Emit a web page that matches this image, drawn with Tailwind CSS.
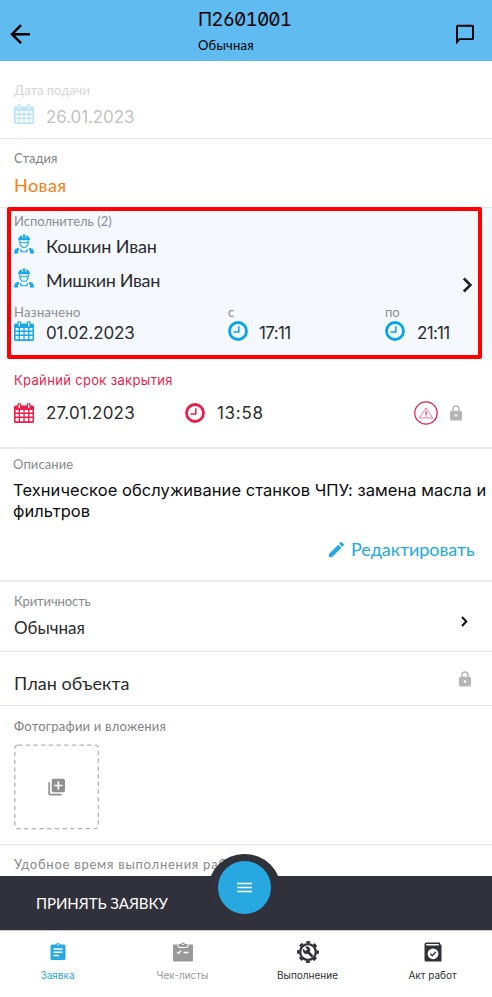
<!DOCTYPE html>
<html lang="ru">
<head>
<meta charset="utf-8">
<title>Заявка П2601001</title>
<script src="https://cdn.jsdelivr.net/npm/@tailwindcss/browser@4"></script>
</head>
<body class="bg-white">
<svg class="hidden">
  <symbol id="cal" viewBox="0 0 20 20">
    <path fill="currentColor" fill-rule="evenodd" d="M1.500 2.500h1.800V2a2 2 0 0 1 4 0v.5h5.400V2a2 2 0 0 1 4 0v.5h1.800A1.500 1.500 0 0 1 20 4v14.500a1.500 1.500 0 0 1-1.500 1.500h-17A1.500 1.500 0 0 1 0 18.500V4a1.500 1.500 0 0 1 1.500-1.500zM4.600 1.900v2.600a.7.700 0 0 0 1.400 0V1.900a.7.700 0 0 0-1.400 0zm9.400 0v2.600a.7.700 0 0 0 1.400 0V1.900a.7.700 0 0 0-1.400 0zM1.600 7v2.600h3V7zm4.400 0v2.600h3.400V7zm4.700 0v2.600h3.400V7zm4.800 0v2.600h3V7zM1.600 10.900v2.700h3v-2.700zm4.400 0v2.700h3.400v-2.700zm4.700 0v2.700h3.400v-2.700zm4.800 0v2.700h3v-2.700zM1.600 15v3.200h3V15zm4.400 0v3.200h3.400V15zm4.700 0v3.200h3.400V15zm4.800 0v3.200h3V15z"/>
  </symbol>
  <symbol id="clock" viewBox="0 0 20 20">
    <circle cx="10" cy="10" r="8.500" fill="none" stroke="currentColor" stroke-width="2.800"/>
    <path d="M10.800 5.200v5.700H5.500" fill="none" stroke="currentColor" stroke-width="1.500"/>
  </symbol>
  <symbol id="worker" viewBox="0 0 20 20">
    <path fill="currentColor" d="M4 6.300C4.100 3.700 5.700 1.800 8 1.200V4h.8V.5h2.600V4h.8V1.200c2.300.6 3.800 2.500 3.900 5.100zM0 19.500c0-3 .8-4.800 3.200-5.300l1.800-.4v2.900h-1v2.800zM20 19.500c0-3-.8-4.800-3.200-5.300l-1.800-.4v2.900h1v2.800zM6.300 14.900h1.300v2.300h4.800v-2.300h1.300v3.400H6.300z"/>
    <path d="M5.600 6.500c0 4.300 1.800 7 4.400 7s4.400-2.700 4.400-7M5.600 8c2.500.8 6.300.8 8.800 0" fill="none" stroke="currentColor" stroke-width="1.100"/>
  </symbol>
  <symbol id="lock" viewBox="0 0 12 16">
    <path d="M3 6.500V4a3 3 0 0 1 6 0v2.500" fill="none" stroke="currentColor" stroke-width="1.400"/>
    <path fill="currentColor" fill-rule="evenodd" d="M1.500 5.800h9A1.500 1.500 0 0 1 12 7.300v6.700a1.500 1.500 0 0 1-1.500 1.500h-9A1.500 1.500 0 0 1 0 14V7.300a1.500 1.500 0 0 1 1.500-1.500zM6 9.200a1.300 1.300 0 1 0 0 2.600 1.300 1.300 0 0 0 0-2.600z"/>
  </symbol>
</svg>

<div class="relative flex h-[997px] w-[492px] flex-col overflow-hidden font-['Lato','Noto_Sans',sans-serif] text-[#2b2c2e]">
  <header class="flex h-[61px] shrink-0 items-start bg-[#5fbbf0] text-black">
    <svg class="ml-[10px] mt-[24px] h-5 w-5" viewBox="0 0 20 20" fill="none" stroke="currentColor" stroke-width="2.500"><path d="M20 10.200H2.500M11 1.200l-9 9 9 9"/></svg>
    <div class="ml-[168px] w-[257px] pt-[8px]">
      <h1 class="font-[Inter] text-[19px] leading-6 tracking-[-0.900px] [font-feature-settings:'zero','tnum','ss01']">П2601001</h1>
      <p class="mt-[5px] text-[13px] leading-4 tracking-[0.250px]">Обычная</p>
    </div>
    <svg class="mt-[24px] ml-[1px] h-5 w-[18px]" viewBox="0 0 18 20" fill="none" stroke="currentColor" stroke-width="1.900"><path d="M1 18V2.400a.7.700 0 0 1 .7-.7h14.600a.7.700 0 0 1 .7.700v12a.7.700 0 0 1-.7.700H3.300z"/></svg>
  </header>

  <section class="h-[78px] shrink-0 border-b border-[#e6e6e6] pl-[14px] pt-[21px] text-[#c4c4c4]">
    <p class="text-[13px] leading-4 text-[#d6d6d6]">Дата подачи</p>
    <div class="mt-[6px] flex h-6 gap-[12px]">
      <svg class="h-5 w-5 text-[#bde5fa]"><use href="#cal"/></svg>
      <span class="font-[Inter] text-[17px] leading-[26px] tracking-[-0.100px]">26.01.2023</span>
    </div>
  </section>

  <section class="h-[69px] shrink-0 border-b border-[#e6e6e6] pl-[14px] pt-[11px]">
    <p class="text-[13px] leading-4 text-[#808285]">Стадия</p>
    <p class="mt-[7px] text-[18px] leading-6 tracking-[0.450px] text-[#ff7a0f]">Новая</p>
  </section>

  <section class="relative h-[152px] shrink-0 bg-[#f5f8ff] pl-[14px] pt-[5px]">
    <div class="pointer-events-none absolute -top-[1.500px] left-[7px] h-[152px] w-[474.500px] rounded-[2px] border-4 border-[#ff0000]"></div>
    <p class="text-[13px] leading-4 text-[#8a8c90]">Исполнитель (2)</p>
    <div class="mt-[5px] flex h-[34px] gap-[12px]">
      <svg class="h-5 w-5 text-[#1ba8ea]"><use href="#worker"/></svg>
      <span class="text-[18px] leading-6 tracking-[-0.150px]">Кошкин Иван</span>
    </div>
    <div class="flex h-[34px] gap-[12px]">
      <svg class="h-5 w-5 text-[#1ba8ea]"><use href="#worker"/></svg>
      <span class="text-[18px] leading-6 tracking-[-0.350px]">Мишкин Иван</span>
    </div>
    <div class="mt-[2px] grid grid-cols-[214px_157px_1fr]">
      <div>
        <p class="text-[13px] leading-4 tracking-[0.300px] text-[#8a8c90]">Назначено</p>
        <div class="mt-px flex gap-[12px]"><svg class="h-5 w-5 text-[#1ba8ea]"><use href="#cal"/></svg><span class="font-[Inter] text-[17px] leading-[24px] tracking-[-0.150px]">01.02.2023</span></div>
      </div>
      <div>
        <p class="text-[13px] leading-4 text-[#8a8c90]">с</p>
        <div class="mt-px flex gap-[11px]"><svg class="h-5 w-5 text-[#05a5ec]"><use href="#clock"/></svg><span class="font-[Inter] text-[17px] leading-[24px] tracking-[-0.600px]">17:11</span></div>
      </div>
      <div>
        <p class="text-[13px] leading-4 text-[#8a8c90]">по</p>
        <div class="mt-px flex gap-[12px]"><svg class="h-5 w-5 text-[#05a5ec]"><use href="#clock"/></svg><span class="font-[Inter] text-[17px] leading-[24px] tracking-[-0.700px]">21:11</span></div>
      </div>
    </div>
    <svg class="absolute left-[462px] top-[68.500px] h-4 w-[11px]" viewBox="0 0 11 16" fill="none" stroke="#1f1f24" stroke-width="2.600"><path d="M1.800 1.500 8.400 8l-6.600 6.500"/></svg>
  </section>

  <section class="h-[89px] shrink-0 border-b-2 border-[#ebebeb] pl-[14px] pt-[12px]">
    <p class="font-[Inter] text-[13px] leading-4 tracking-[0.330px] text-[#ee1c4a]">Крайний срок закрытия</p>
    <div class="mt-[13px] flex h-6 items-center">
      <svg class="h-5 w-5 text-[#ee1c4a]"><use href="#cal"/></svg>
      <span class="ml-[12px] w-[139px] font-[Inter] text-[17px] leading-6 tracking-[0.200px]">27.01.2023</span>
      <svg class="h-5 w-5 text-[#ee1c4a]"><use href="#clock"/></svg>
      <span class="ml-[12px] w-[197px] font-[Inter] text-[17px] leading-6 tracking-[0.700px]">13:58</span>
      <svg class="h-6 w-6" viewBox="0 0 24 24" fill="none" stroke="#ee1c4a"><circle cx="12" cy="12" r="11.200" stroke-width="1.200"/><path d="M12 6.800 5.400 17h13.200z" stroke-width=".6" stroke-linejoin="round"/><path d="M12 10.200v3.600M12 14.600v1" stroke-width="1.200"/></svg>
      <svg class="ml-[12px] h-4 w-3 text-[#b5b5b5]"><use href="#lock"/></svg>
    </div>
  </section>

  <section class="h-[133px] shrink-0 border-b-2 border-[#ededed] pl-[13px] pt-[7px]">
    <p class="text-[13px] leading-4 tracking-[0.100px] text-[#87898b]">Описание</p>
    <p class="mt-[8px] whitespace-nowrap font-[Inter] text-[16.500px] leading-[20.500px] tracking-[0.050px] text-[#0c0c0c]">Техническое обслуживание станков ЧПУ: замена масла и<br>фильтров</p>
    <div class="mt-[16px] flex items-center pl-[316px] text-[#22a9e8]">
      <svg class="mr-[7px] h-[15px] w-[15px]" viewBox="3 3 18 18" fill="currentColor"><path d="M3 17.250V21h3.750L17.810 9.940l-3.750-3.750zM20.710 7.040a1 1 0 0 0 0-1.410l-2.340-2.340a1 1 0 0 0-1.410 0l-1.830 1.830 3.750 3.750z"/></svg>
      <span class="text-[18px] leading-6 tracking-[-0.050px]">Редактировать</span>
    </div>
  </section>

  <section class="flex h-[70px] shrink-0 border-b border-[#e6e6e6] pl-[14px] pt-[11px]">
    <div class="w-[447px]">
      <p class="text-[13px] leading-4 tracking-[-0.100px] text-[#87898b]">Критичность</p>
      <p class="mt-[7px] text-[17px] leading-6">Обычная</p>
    </div>
    <svg class="mt-[23px] h-[11px] w-[7px]" viewBox="0 0 7 11" fill="none" stroke="#111" stroke-width="2"><path d="M1 1l4.300 4.500L1 10"/></svg>
  </section>

  <section class="flex h-[54px] shrink-0 border-b border-[#e6e6e6] pl-[14px] pt-[19px]">
    <p class="w-[445px] text-[18px] leading-6 tracking-[0.050px]">План объекта</p>
    <svg class="h-4 w-3 text-[#b5b5b5]"><use href="#lock"/></svg>
  </section>

  <section class="h-[139px] shrink-0 border-b border-[#e6e6e6] pl-[14px] pt-[12px]">
    <p class="text-[13px] leading-4 tracking-[0.220px] text-[#808285]">Фотографии и вложения</p>
    <div class="mt-[10px] h-[86px] w-[86px]">
      <svg class="h-[86px] w-[86px]" viewBox="0 0 86 86"><rect x=".8" y="1.200" width="83.500" height="83.500" rx="3" fill="none" stroke="#b4b4b4" stroke-width="1.300" stroke-dasharray="4.500 3.200"/>
        <path transform="translate(32.700 33.200) scale(.83)" fill="#8f8f8f" d="M4 6H2v14a2 2 0 0 0 2 2h14v-2H4zm16-4H8a2 2 0 0 0-2 2v12a2 2 0 0 0 2 2h12a2 2 0 0 0 2-2V4a2 2 0 0 0-2-2zm-1 9h-4v4h-2v-4H9V9h4V5h2v4h4z"/></svg>
    </div>
  </section>

  <section class="h-[31px] shrink-0 pl-[14px] pt-[11px]">
    <p class="whitespace-nowrap text-[13px] leading-4 tracking-[0.750px] text-[#87898b]">Удобное время выполнения работ</p>
  </section>

  <div class="relative flex h-[54px] shrink-0 items-center bg-[#30313a] pl-[36px] text-white">
    <div class="absolute left-[208px] -top-[22px] h-[72px] w-[73px] rounded-full bg-[#30313a]"></div>
    <span class="text-[15px] leading-5 tracking-[-0.050px]">ПРИНЯТЬ ЗАЯВКУ</span>
    <button class="absolute left-[218px] -top-[15px] flex h-[53px] w-[53px] items-center justify-center rounded-full bg-[#27a8e1]">
      <svg class="h-[11px] w-[15px]" viewBox="0 0 15 11" stroke="#fff" stroke-width="1.500"><path d="M0 1.500h15M0 5.500h15M0 9.500h15"/></svg>
    </button>
  </div>

  <nav class="-ml-[5px] grid h-[67px] w-[500px] shrink-0 grid-cols-4 border-t border-[#c8c8c8] bg-white font-[Inter] text-[10px] leading-3 text-[#30313a]">
    <div class="flex flex-col items-center pt-[9px] text-[#27a8e1]">
      <svg class="h-6 w-6" viewBox="0 0 24 24"><path fill="currentColor" d="M6 4.500h3.700a2.500 2.500 0 0 1 4.600 0H18A1.500 1.500 0 0 1 19.500 6v12.500A1.500 1.500 0 0 1 18 20H6a1.500 1.500 0 0 1-1.500-1.500V6A1.500 1.500 0 0 1 6 4.500z"/><path d="M7.500 9h9M7.500 12.300h9M7.500 15.500h5.500" stroke="#fff" stroke-width="1.500"/><circle cx="12" cy="5" r=".8" fill="#fff"/></svg>
      <span class="mt-[5px]">Заявка</span>
    </div>
    <div class="flex flex-col items-center pt-[9px] text-[#999]">
      <svg class="h-6 w-6" viewBox="0 0 24 24"><path fill="currentColor" d="M3 4.500h3.500v1.300A2.200 2.200 0 0 0 8.700 8h6.600a2.200 2.200 0 0 0 2.200-2.200V4.500H21a1 1 0 0 1 1 1v15a1 1 0 0 1-1 1H3a1 1 0 0 1-1-1v-15a1 1 0 0 1 1-1z"/><path fill="currentColor" fill-rule="evenodd" d="M7.500 4H10a2.100 2.100 0 0 1 4 0h2.500v1.500a1.500 1.500 0 0 1-1.500 1.500H9a1.500 1.500 0 0 1-1.500-1.500zM12 3.700a.8.800 0 1 0 0 1.600.8.800 0 0 0 0-1.600z"/><path d="M6.200 12l1.300 1.300 2.500-2.600M12.500 12.500h5" fill="none" stroke="#fff" stroke-width="1.300"/></svg>
      <span class="mt-[5px]">Чек-листы</span>
    </div>
    <div class="flex flex-col items-center pt-[9px]">
      <svg class="h-6 w-6" viewBox="0 0 24 24"><g fill="none" stroke="currentColor"><circle cx="12" cy="12" r="7.900" stroke-width="2.400"/><circle cx="12" cy="12" r="9.800" stroke-width="2.200" stroke-dasharray="3.900 3.797" stroke-dashoffset="1.950"/></g><path d="M11.500 11.500l5 5" stroke="currentColor" stroke-width="2.600"/><path fill="currentColor" d="M7.300 8.700l2.300 2.200 1.800-1.700-2.300-2.300c1.800-.8 3.600-.3 4.500 1 .9 1.200.9 2.700.2 3.900l-2 2c-1.500.6-3.200.2-4.100-1-.9-1.200-1.100-2.900-.4-4.100z"/></svg>
      <span class="mt-[5px]">Выполнение</span>
    </div>
    <div class="flex flex-col items-center pt-[9px]">
      <svg class="h-6 w-6" viewBox="0 0 24 24"><path fill="currentColor" fill-rule="evenodd" d="M5.500 2.500H19v2h1.500v17H5A1.500 1.500 0 0 1 3.500 20V4.500a2 2 0 0 1 2-2zM5.800 4a.8.800 0 0 0 0 1.600h12V4z"/><circle cx="12" cy="13.800" r="5.400" fill="#fff"/><path d="M9.300 13.800l2 2 3.600-3.900" fill="none" stroke="currentColor" stroke-width="1.300"/></svg>
      <span class="mt-[5px]">Акт работ</span>
    </div>
  </nav>
</div>
</body>
</html>
